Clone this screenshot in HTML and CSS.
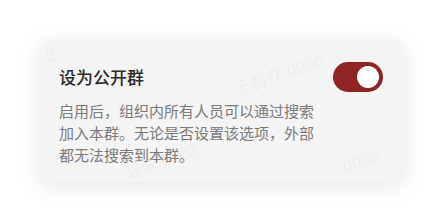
FILE: index.html
```html
<!DOCTYPE html>
<html lang="zh-CN">
<head>
<meta charset="utf-8">
<title>设为公开群</title>
<link rel="stylesheet" href="styles.css">
</head>
<body>
  <div class="card">
    <span class="wm wm-a">王智获 0000</span>
    <span class="wm wm-b">智获 0000</span>
    <span class="wm wm-c">0</span>
    <span class="wm wm-d">0000</span>
    <div class="head">
      <div class="title">设为公开群</div>
      <div class="toggle"><span class="knob"></span></div>
    </div>
    <p class="desc">启用后，组织内所有人员可以通过搜索加入本群。无论是否设置该选项，外部都无法搜索到本群。</p>
  </div>
</body>
</html>
```
FILE: styles.css
```css
html, body {
  margin: 0;
  padding: 0;
  background: #ffffff;
}
body {
  padding: 40px 41px 40px 40px;
  font-family: "Noto Sans CJK SC", "Noto Sans", sans-serif;
}
.card {
  position: relative;
  overflow: hidden;
  box-sizing: border-box;
  width: 364px;
  height: 142px;
  background: #f4f4f4;
  border-radius: 9px;
  box-shadow: 0 4px 24px rgba(0, 0, 0, 0.10);
  padding: 22px 21px 15px 19px;
}
.head {
  position: relative;
  display: flex;
  justify-content: space-between;
  align-items: center;
  height: 30px;
}
.title {
  font-size: 17px;
  line-height: 24px;
  font-weight: 500;
  color: #2a2a2a;
}
.toggle {
  box-sizing: border-box;
  width: 50px;
  height: 30px;
  border-radius: 15px;
  background: #8e2424;
  padding: 4px;
  display: flex;
  justify-content: flex-end;
}
.knob {
  width: 22px;
  height: 22px;
  border-radius: 50%;
  background: #ffffff;
}
.desc {
  position: relative;
  margin: 8px 0 0 0;
  width: 258px;
  font-size: 15px;
  line-height: 22px;
  color: #7a7a7a;
}
.wm {
  position: absolute;
  font-size: 17px;
  line-height: 1;
  color: rgba(0, 0, 0, 0.045);
  white-space: nowrap;
  transform: rotate(-18deg);
  transform-origin: left top;
}
.wm-a { left: 192px; top: 40px; }
.wm-b { left: 82px; top: 124px; }
.wm-c { left: 3px; top: 8px; }
.wm-d { left: 300px; top: 118px; }
```
